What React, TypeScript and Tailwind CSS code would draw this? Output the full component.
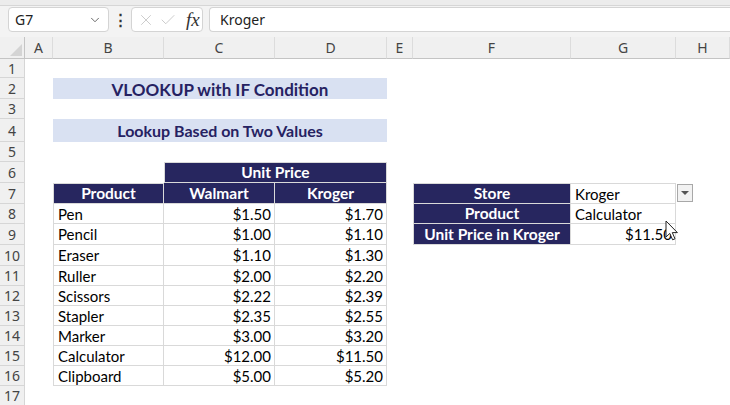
import { ChevronDown, X, Check } from 'lucide-react';

const font = { fontFamily: 'Lato, "Noto Sans", sans-serif' };

const items: [string, string, string][] = [
  ['Pen', '$1.50', '$1.70'],
  ['Pencil', '$1.00', '$1.10'],
  ['Eraser', '$1.10', '$1.30'],
  ['Ruller', '$2.00', '$2.20'],
  ['Scissors', '$2.22', '$2.39'],
  ['Stapler', '$2.35', '$2.55'],
  ['Marker', '$3.00', '$3.20'],
  ['Calculator', '$12.00', '$11.50'],
  ['Clipboard', '$5.00', '$5.20'],
];

function RowHead({ n }: { n: number }) {
  return (
    <div className="flex items-center justify-center bg-[#f0f0f0] border-b border-r border-[#d6d6d6] text-[14px] text-[#444] font-['Noto_Sans',sans-serif]">
      {n}
    </div>
  );
}

function Dark({ children, className = '' }: { children: React.ReactNode; className?: string }) {
  return (
    <div
      className={`flex items-center justify-center pt-[1px] bg-[#27265f] text-white font-bold text-[15.5px] border-[#d9d9d9] border-r border-b leading-none ${className}`}
    >
      {children}
    </div>
  );
}

function Data({ children, right, className = '' }: { children?: React.ReactNode; right?: boolean; className?: string }) {
  return (
    <div
      className={`flex items-center pt-[1px] text-[15px] text-black leading-none border-[#d9d9d9] border-r border-b ${right ? 'justify-end pr-[3px]' : 'pl-[4px]'} ${className}`}
    >
      {children}
    </div>
  );
}

export default function App() {
  return (
    <div className="w-[730px] h-[405px] overflow-hidden bg-white relative" style={font}>
      {/* formula bar */}
      <div className="h-[6px] bg-[#ececec] border-b border-[#d6d6d6]" />
      <div className="h-[31px] bg-[#f3f3f3] flex items-start pt-[1px] gap-[6px] pl-[8px] font-['Noto_Sans',sans-serif]">
        <div className="w-[101px] h-[25px] bg-white border border-[#d4d4d4] rounded-[4px] flex items-center justify-between pl-[6px] pr-[6px] text-[14px] text-[#222]">
          <span>G7</span>
          <ChevronDown size={14} strokeWidth={1.5} className="text-[#555]" />
        </div>
        <div className="w-[10px] h-[25px] flex items-center justify-center text-[#333] text-[15px] font-bold">⋮</div>
        <div className="w-[72px] h-[25px] bg-white border border-[#d4d4d4] rounded-[4px] flex items-center pl-[5px] gap-[4px]">
          <X size={18} strokeWidth={1} className="text-[#bbb]" />
          <Check size={18} strokeWidth={1} className="text-[#bbb]" />
          <span className="ml-[5px] italic text-[19px] leading-none text-[#333] font-['Liberation_Serif',serif]">fx</span>
        </div>
        <div className="flex-1 h-[25px] bg-white border border-[#d4d4d4] rounded-l-[4px] border-r-0 flex items-center pl-[10px] text-[14px] text-[#222]">
          Kroger
        </div>
      </div>

      {/* sheet */}
      <div className="grid grid-cols-[25px_28px_111px_111px_112px_26px_158px_105px_1fr] grid-rows-[22px_19px_21px_20px_23px_20px_21px_21px_20px_21px_21px_20px_20px_20px_20px_20px_20px_20px]">
        {/* column headers */}
        <div className="bg-[#f0f0f0] border-b border-r border-[#c4c4c4] relative">
          <div className="absolute right-[2px] bottom-[2px] w-0 h-0 border-l-[12px] border-l-transparent border-b-[12px] border-b-[#d4d4d4]" />
        </div>
        {['A', 'B', 'C', 'D', 'E', 'F', 'G', 'H'].map(c => (
          <div
            key={c}
            className="bg-[#f0f0f0] border-b border-b-[#c4c4c4] border-r border-r-[#dcdcdc] flex items-center justify-center text-[14px] text-[#444] font-['Noto_Sans',sans-serif]"
          >
            {c}
          </div>
        ))}

        {/* 1 */}
        <RowHead n={1} />
        <div className="col-span-8" />

        {/* 2 */}
        <RowHead n={2} />
        <div />
        <div className="col-span-3 bg-[#d9e1f2] flex items-center justify-center pt-[1px] text-[17px] font-bold text-[#262262] leading-none">
          VLOOKUP with IF Condition
        </div>
        <div className="col-span-4" />

        {/* 3 */}
        <RowHead n={3} />
        <div className="col-span-8" />

        {/* 4 */}
        <RowHead n={4} />
        <div />
        <div className="col-span-3 bg-[#d9e1f2] flex items-center justify-center pt-[1px] text-[16px] font-bold text-[#262262] leading-none">
          Lookup Based on Two Values
        </div>
        <div className="col-span-4" />

        {/* 5 */}
        <RowHead n={5} />
        <div className="col-span-8" />

        {/* 6 */}
        <RowHead n={6} />
        <div className="col-span-2" />
        <Dark className="col-span-2 border-t border-l">Unit Price</Dark>
        <div className="col-span-4" />

        {/* 7 */}
        <RowHead n={7} />
        <div />
        <Dark className="border-t border-l">Product</Dark>
        <Dark>Walmart</Dark>
        <Dark>Kroger</Dark>
        <div />
        <Dark className="border-t border-l">Store</Dark>
        <Data className="border-t">Kroger</Data>
        <div className="flex items-start pt-[1px] pl-[1px]">
          <div className="w-[16px] h-[18px] bg-[#f2f2f2] border border-[#a8a8a8] flex items-center justify-center">
            <div className="w-0 h-0 border-l-[4px] border-r-[4px] border-t-[4px] border-l-transparent border-r-transparent border-t-[#555]" />
          </div>
        </div>

        {items.map(([p, w, k], i) => {
          const row = i + 8;
          return (
            <div key={p} className="contents">
              <RowHead n={row} />
              <div />
              <Data className="border-l">{p}</Data>
              <Data right>{w}</Data>
              <Data right>{k}</Data>
              {row === 8 ? (
                <>
                  <div />
                  <Dark className="border-l">Product</Dark>
                  <Data>Calculator</Data>
                  <div />
                </>
              ) : row === 9 ? (
                <>
                  <div />
                  <Dark className="border-l">Unit Price in Kroger</Dark>
                  <Data right>$11.50</Data>
                  <div />
                </>
              ) : (
                <div className="col-span-4" />
              )}
            </div>
          );
        })}

        {/* 17 */}
        <RowHead n={17} />
        <div className="col-span-8" />
      </div>

      {/* mouse pointer */}
      <svg className="absolute left-[665px] top-[220px]" width="14" height="22" viewBox="0 0 14 22">
        <path
          d="M1 1 L1 17 L4.8 13.4 L7.6 19.8 L10 18.8 L7.3 12.6 L12.4 12.6 Z"
          fill="white"
          stroke="#222"
          strokeWidth="1"
          strokeLinejoin="round"
        />
      </svg>
    </div>
  );
}
